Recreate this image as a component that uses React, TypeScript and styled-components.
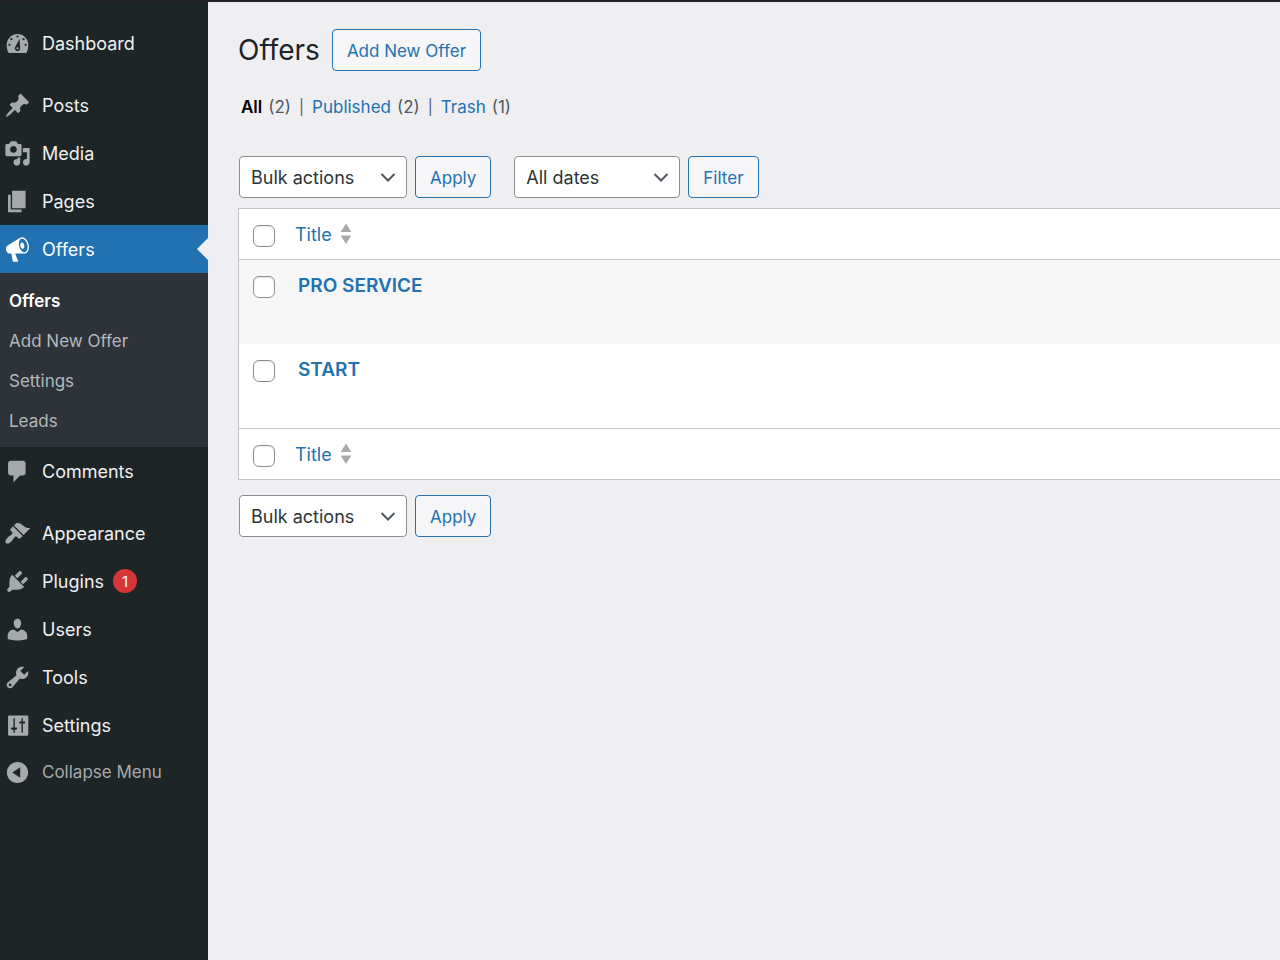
import React from "react";
import styled, { createGlobalStyle } from "styled-components";

const GlobalStyle = createGlobalStyle`
  *, *::before, *::after { box-sizing: border-box; }
  body {
    margin: 0;
    background: #efeff1;
    color: #2c3338;
    font-family: Inter, "Liberation Sans", sans-serif;
    font-size: 18px;
  }
  a { text-decoration: none; }
  ul { list-style: none; margin: 0; padding: 0; }
`;

const Page = styled.div`
  display: flex;
  min-height: 100vh;
  border-top: 2px solid #222225;
`;

const Sidebar = styled.nav`
  flex: 0 0 208px;
  padding-top: 17px;
  background: #1e2527;
  border-bottom: 1px solid #232226;
`;

const MenuGroup = styled.ul`
  & + & { margin-top: 14px; }
`;

const MenuLink = styled.a<{ $current?: boolean }>`
  position: relative;
  display: flex;
  align-items: center;
  gap: 9px;
  height: 48px;
  padding-left: 4px;
  color: ${(p) => (p.$current ? "#fff" : "#f0f0f1")};
  background: ${(p) => (p.$current ? "#2271b1" : "transparent")};

  &::after {
    content: ${(p) => (p.$current ? '""' : "none")};
    position: absolute;
    right: 0;
    border: 11px solid transparent;
    border-left-width: 0;
    border-right-color: #efeff1;
  }
`;

const IconSvg = styled.svg<{ $current?: boolean }>`
  flex: none;
  width: 27px;
  height: 27px;
  margin-right: 2px;
  fill: ${(p) => (p.$current ? "#fff" : "#a7aaad")};
`;

const Badge = styled.span`
  display: flex;
  align-items: center;
  justify-content: center;
  width: 24px;
  height: 24px;
  border-radius: 50%;
  background: #d63638;
  color: #fff;
  font-size: 15px;
`;

const CollapseButton = styled.button`
  display: flex;
  align-items: center;
  gap: 9px;
  width: 100%;
  height: 46px;
  padding: 0 0 0 4px;
  border: 0;
  background: transparent;
  color: #a7aaad;
  font: inherit;
  font-size: 17px;
`;

const Submenu = styled.ul`
  padding: 8px 0 6px;
  background: #2e3239;
`;

const SubmenuLink = styled.a<{ $current?: boolean }>`
  display: block;
  padding-left: 9px;
  font-size: 17px;
  line-height: 40px;
  color: ${(p) => (p.$current ? "#fff" : "#b4b8bc")};
  font-weight: ${(p) => (p.$current ? 600 : 400)};
`;

const Main = styled.main`
  flex: 1;
  min-width: 0;
  padding: 27px 0 40px 30px;
`;

const Heading = styled.header`
  display: flex;
  align-items: center;
  gap: 12px;
`;

const PageTitle = styled.h1`
  margin: 0;
  color: #1d2327;
  font-size: 28px;
  font-weight: 400;
  line-height: 42px;
`;

const buttonLook = `
  display: flex;
  align-items: center;
  height: 42px;
  padding: 2px 14px 0;
  border: 1px solid #2271b1;
  border-radius: 4px;
  background: #f6f6f8;
  color: #2271b1;
  font-family: inherit;
  font-size: 17px;
`;

const Button = styled.button`${buttonLook}`;
const ButtonLink = styled.a`${buttonLook}`;

const Views = styled.ul`
  display: flex;
  margin-top: 24px;
  padding-left: 3px;
  font-size: 17px;
  line-height: 24px;
  color: #50575e;

  li { display: flex; gap: 6px; }
  li + li::before { content: "|"; margin: 0 2px 0 8px; font-size: 15px; }
`;

const ViewLink = styled.a<{ $current?: boolean }>`
  color: ${(p) => (p.$current ? "#000" : "#2271b1")};
  font-weight: ${(p) => (p.$current ? 600 : 400)};
`;

const Toolbar = styled.div<{ $place: "top" | "bottom" }>`
  display: flex;
  gap: 23px;
  padding-left: 1px;
  margin: ${(p) => (p.$place === "top" ? "37px 0 10px" : "15px 0 0")};
`;

const Actions = styled.form`
  display: flex;
  gap: 8px;
`;

const SelectBox = styled.span<{ $width: number }>`
  position: relative;
  display: block;
  width: ${(p) => p.$width}px;

  svg {
    position: absolute;
    right: 11px;
    top: 13px;
    pointer-events: none;
  }
`;

const Select = styled.select`
  appearance: none;
  width: 100%;
  height: 42px;
  padding: 0 34px 0 11px;
  border: 1px solid #8c8f94;
  border-radius: 4px;
  background: #fff;
  color: #2c3338;
  font-family: inherit;
  font-size: 18px;
`;

const Table = styled.table`
  width: 100%;
  border: 1px solid #c3c4c7;
  border-right: 0;
  border-spacing: 0;
  background: #fff;
  table-layout: fixed;

  th, td { padding: 0; text-align: left; vertical-align: top; font-weight: 400; }
  thead th { border-bottom: 1px solid #c3c4c7; }
  tfoot th { border-top: 1px solid #c3c4c7; }
`;

const CheckCell = styled.th`
  width: 56px;
`;

const BodyRow = styled.tr<{ $shaded?: boolean }>`
  height: 84px;
  background: ${(p) => (p.$shaded ? "#f6f6f7" : "#fff")};
`;

const Checkbox = styled.input`
  appearance: none;
  display: block;
  width: 22px;
  height: 22px;
  margin: 16px 0 0 14px;
  border: 1px solid #8c8f94;
  border-radius: 6px;
  background: #fff;
  box-shadow: inset 0 1px 2px rgba(0, 0, 0, 0.1);
`;

const SortLink = styled.a`
  display: flex;
  align-items: center;
  gap: 8px;
  height: 50px;
  color: #2271b1;
`;

const RowTitle = styled.a`
  display: block;
  padding: 14px 0 0 3px;
  font-size: 19px;
  line-height: 24px;
  color: #2271b1;
  font-weight: 600;
`;

const icons = {
  dashboard:
    "M3.4 17h13.2C17.5 15.500 18 13.300 18 11a8 8 0 0 0-16 0c0 2.300.500 4.500 1.400 6zM10 4a.8.8 0 0 1 0 1.600.8.8 0 0 1 0-1.600zM5.500 6a.8.8 0 0 1 0 1.600.8.8 0 0 1 0-1.600zM14.500 6a.8.8 0 0 1 0 1.600.8.8 0 0 1 0-1.600zM4 10.200a.8.8 0 0 1 0 1.600.8.8 0 0 1 0-1.600zM16 10.200a.8.8 0 0 1 0 1.600.8.8 0 0 1 0-1.600zM11.500 6.500L12 13.500a2 2 0 1 1-3.700-1zM10 12.800a.8.8 0 0 0 0 1.600.8.8 0 0 0 0-1.600z",
  pin: "M10.44 3.02l1.82-1.82 6.36 6.35-1.83 1.82c-1.05-.68-2.48-.57-3.41.36l-.75.75c-.92.93-1.04 2.35-.35 3.41l-1.83 1.82-2.41-2.41-2.8 2.79c-.42.42-3.38 2.71-3.8 2.29s1.86-3.39 2.28-3.81l2.79-2.79L4.1 9.36l1.83-1.82c1.05.69 2.48.57 3.4-.36l.75-.75c.93-.92 1.05-2.35.36-3.41z",
  media:
    "M13 11V4c0-.55-.45-1-1-1h-1.67L9 1H5L3.67 3H2c-.55 0-1 .45-1 1v7c0 .55.45 1 1 1h10c.55 0 1-.45 1-1zM7 4.5c1.38 0 2.5 1.12 2.5 2.5S8.38 9.5 7 9.5 4.5 8.38 4.5 7 5.62 4.5 7 4.5zM14 6h5v10.5c0 1.38-1.12 2.5-2.5 2.5S14 17.88 14 16.5s1.12-2.5 2.5-2.5c.17 0 .34.02.5.05V9h-3V6zm-4 8.05V13h2v3.5c0 1.38-1.12 2.5-2.5 2.5S7 17.88 7 16.5 8.12 14 9.5 14c.17 0 .34.02.5.05z",
  pages: "M6 15V2h10v13H6zm-1 1h8v2H3V5h2v11z",
  megaphone:
    "M18.15 5.94c.46 1.62.38 3.22-.02 4.48-.42 1.28-1.26 2.18-2.3 2.48-.16.06-.26.06-.4.06-.06.02-.12.02-.18.02-.06.02-.14.02-.22.02h-6.8l2.22 5.5c.02.14-.06.26-.14.34-.08.1-.24.16-.34.16H6.95c-.1 0-.26-.06-.34-.16-.08-.08-.16-.2-.14-.34l-1-5.5H4.25l-.02-.02c-.5.06-1.08-.18-1.54-.62s-.88-1.08-1.06-1.88c-.24-.8-.2-1.56-.02-2.2.18-.62.58-1.08 1.06-1.3l.02-.02 9-5.4c.1-.06.18-.1.24-.16.06-.04.14-.08.24-.12.16-.08.28-.12.5-.18 1.04-.3 2.24.1 3.22.98s1.84 2.24 2.26 3.86zm-2.58 5.98h-.02c.4-.1.74-.34 1.04-.7.58-.7.86-1.76.86-3.04 0-.64-.1-1.3-.28-1.98-.34-1.36-1.02-2.5-1.78-3.24s-1.68-1.1-2.46-.88c-.82.22-1.4.96-1.7 2-.32 1.04-.28 2.36.06 3.72.38 1.36 1 2.5 1.8 3.24.78.74 1.62 1.1 2.48.88zm-2.54-7.08c.22-.04.42-.02.62.04.38.16.76.48 1.02 1s.42 1.2.42 1.78c0 .3-.04.56-.12.8-.18.48-.44.84-.86.94-.34.1-.8-.06-1.14-.4s-.64-.86-.78-1.5c-.18-.62-.12-1.24.02-1.72s.48-.84.82-.94z",
  comments:
    "M5 2h9c1.1 0 2 .9 2 2v7c0 1.1-.9 2-2 2h-2l-5 5v-5H5c-1.1 0-2-.9-2-2V4c0-1.1.9-2 2-2z",
  appearance:
    "M14.48 11.06L7.41 3.99l1.5-1.5c.5-.56 2.3-.47 3.51.32 1.21.8 1.43 1.28 2.91 2.1 1.18.64 2.45 1.26 4.45.85zm-.71.71L6.7 4.7 4.93 6.47c-.39.39-.39 1.02 0 1.41l1.06 1.06c.39.39.39 1.03 0 1.42-.6.6-1.43 1.11-2.21 1.69-.35.26-.7.53-1.01.84C1.43 14.23.4 16.08 1.4 17.07c.99 1 2.84-.03 4.18-1.36.31-.31.58-.66.85-1.02.57-.78 1.08-1.61 1.69-2.21.39-.39 1.02-.39 1.41 0l1.06 1.06c.39.39 1.02.39 1.41 0z",
  plugins:
    "M13.11 4.36L9.87 7.6 8 5.73l3.24-3.24c.35-.34 1.05-.2 1.56.32.52.51.66 1.21.31 1.55zm-8 1.77l.91-1.12 9.01 9.01-1.19.84c-.71.71-2.63 1.16-3.82 1.16H6.14L4.9 17.26c-.59.59-1.54.59-2.12 0-.59-.58-.59-1.53 0-2.12l1.24-1.24v-3.88c0-1.13.4-3.19 1.09-3.89zm7.26 3.97l3.24-3.24c.34-.35 1.04-.21 1.55.31.52.51.66 1.21.31 1.55l-3.24 3.25z",
  users:
    "M10 9.25c-2.27 0-2.73-3.44-2.73-3.44C7 4.02 7.82 2 9.97 2c2.16 0 2.98 2.02 2.71 3.81 0 0-.41 3.44-2.68 3.44zm0 2.57L12.72 10c2.39 0 4.52 2.33 4.52 4.53v2.49s-3.65 1.13-7.24 1.13c-3.65 0-7.24-1.13-7.24-1.13v-2.49c0-2.25 1.94-4.48 4.47-4.48z",
  tools:
    "M16.68 9.77c-1.34 1.34-3.3 1.67-4.95.99l-5.41 6.52c-.99.99-2.59.99-3.58 0s-.99-2.59 0-3.57l6.52-5.42c-.68-1.65-.35-3.61.99-4.95 1.28-1.28 3.12-1.62 4.72-1.06l-2.89 2.89 2.82 2.82 2.86-2.87c.53 1.58.18 3.39-1.08 4.65zM3.81 16.21c.4.39 1.04.39 1.43 0 .4-.4.4-1.04 0-1.43-.39-.4-1.03-.4-1.43 0-.39.39-.39 1.03 0 1.43z",
  settings:
    "M18 16.6V3.4c0-.5-.4-.9-.9-.9H3.9c-.5 0-.9.4-.9.9v13.2c0 .5.4.9.9.9h13.2c.5 0 .9-.4.9-.9zM8 11.500h1c.4 0 .8.3.8.800s-.4.800-.8.800H8V15c0 .28-.22.5-.5.5S7 15.280 7 15v-1.900H6c-.4 0-.8-.3-.8-.800s.4-.800.8-.800h1V5c0-.28.22-.5.5-.5s.5.22.5.5v6.500zM13 8.600h-1c-.4 0-.8-.3-.8-.800s.4-.800.8-.800h1V5c0-.28.22-.5.5-.5s.5.22.5.5v2h1c.4 0 .8.3.8.800s-.4.800-.8.800h-1V15c0 .28-.22.5-.5.5s-.5-.22-.5-.5V8.600z",
  collapse:
    "M10 2.16c4.33 0 7.84 3.51 7.84 7.84s-3.51 7.84-7.84 7.84S2.16 14.33 2.16 10 5.71 2.16 10 2.16zm2 11.72V6.12L6.18 9.97z",
};

type IconName = keyof typeof icons;

function Icon({ name, current }: { name: IconName; current?: boolean }) {
  return (
    <IconSvg viewBox="0 0 20 20" $current={current} aria-hidden="true">
      <path fillRule="evenodd" d={icons[name]} />
    </IconSvg>
  );
}

type Item = {
  label: string;
  icon: IconName;
  current?: boolean;
  badge?: number;
  children?: string[];
};

const menu: Item[][] = [
  [{ label: "Dashboard", icon: "dashboard" }],
  [
    { label: "Posts", icon: "pin" },
    { label: "Media", icon: "media" },
    { label: "Pages", icon: "pages" },
    {
      label: "Offers",
      icon: "megaphone",
      current: true,
      children: ["Offers", "Add New Offer", "Settings", "Leads"],
    },
    { label: "Comments", icon: "comments" },
  ],
  [
    { label: "Appearance", icon: "appearance" },
    { label: "Plugins", icon: "plugins", badge: 1 },
    { label: "Users", icon: "users" },
    { label: "Tools", icon: "tools" },
    { label: "Settings", icon: "settings" },
  ],
];

function MenuItem({ item }: { item: Item }) {
  return (
    <li>
      <MenuLink href="#" $current={item.current}>
        <Icon name={item.icon} current={item.current} />
        {item.label}
        {item.badge && <Badge>{item.badge}</Badge>}
      </MenuLink>
      {item.children && (
        <Submenu>
          {item.children.map((label, i) => (
            <li key={label}>
              <SubmenuLink href="#" $current={i === 0}>
                {label}
              </SubmenuLink>
            </li>
          ))}
        </Submenu>
      )}
    </li>
  );
}

function SelectField({ label, text, width }: { label: string; text: string; width: number }) {
  return (
    <SelectBox $width={width}>
      <Select aria-label={label}>
        <option>{text}</option>
      </Select>
      <svg width="16" height="16" viewBox="0 0 16 16" fill="none" aria-hidden="true">
        <path d="M1.5 5L8 11.5L14.5 5" stroke="#50575e" strokeWidth="2" />
      </svg>
    </SelectBox>
  );
}

function BulkActions() {
  return (
    <Actions onSubmit={(e) => e.preventDefault()}>
      <SelectField label="Select bulk action" text="Bulk actions" width={168} />
      <Button>Apply</Button>
    </Actions>
  );
}

function ColumnHeadings() {
  return (
    <tr>
      <CheckCell scope="col">
        <Checkbox type="checkbox" aria-label="Select all" />
      </CheckCell>
      <th scope="col">
        <SortLink href="#">
          Title
          <svg width="12" height="22" viewBox="0 0 12 22" fill="#a7aaad" aria-hidden="true">
            <path d="M6 0.5L11.3 9H.7zM6 21L11.3 12.5H.7z" />
          </svg>
        </SortLink>
      </th>
    </tr>
  );
}

const offers = ["PRO SERVICE", "START"];

const views = [
  { label: "All", count: 2 },
  { label: "Published", count: 2 },
  { label: "Trash", count: 1 },
];

export default function App() {
  return (
    <>
      <GlobalStyle />
      <Page>
        <Sidebar aria-label="Main menu">
          {menu.map((group, i) => (
            <MenuGroup key={i}>
              {group.map((item) => (
                <MenuItem key={item.label} item={item} />
              ))}
            </MenuGroup>
          ))}
          <CollapseButton type="button">
            <Icon name="collapse" />
            Collapse Menu
          </CollapseButton>
        </Sidebar>
        <Main>
          <Heading>
            <PageTitle>Offers</PageTitle>
            <ButtonLink href="#">Add New Offer</ButtonLink>
          </Heading>
          <Views>
            {views.map((view, i) => (
              <li key={view.label}>
                <ViewLink href="#" $current={i === 0}>
                  {view.label}
                </ViewLink>
                <span>({view.count})</span>
              </li>
            ))}
          </Views>
          <Toolbar $place="top">
            <BulkActions />
            <Actions onSubmit={(e) => e.preventDefault()}>
              <SelectField label="Filter by date" text="All dates" width={166} />
              <Button>Filter</Button>
            </Actions>
          </Toolbar>
          <Table>
            <thead>
              <ColumnHeadings />
            </thead>
            <tbody>
              {offers.map((offer, i) => (
                <BodyRow key={offer} $shaded={i % 2 === 0}>
                  <td>
                    <Checkbox type="checkbox" aria-label={`Select ${offer}`} />
                  </td>
                  <td>
                    <RowTitle href="#">{offer}</RowTitle>
                  </td>
                </BodyRow>
              ))}
            </tbody>
            <tfoot>
              <ColumnHeadings />
            </tfoot>
          </Table>
          <Toolbar $place="bottom">
            <BulkActions />
          </Toolbar>
        </Main>
      </Page>
    </>
  );
}
